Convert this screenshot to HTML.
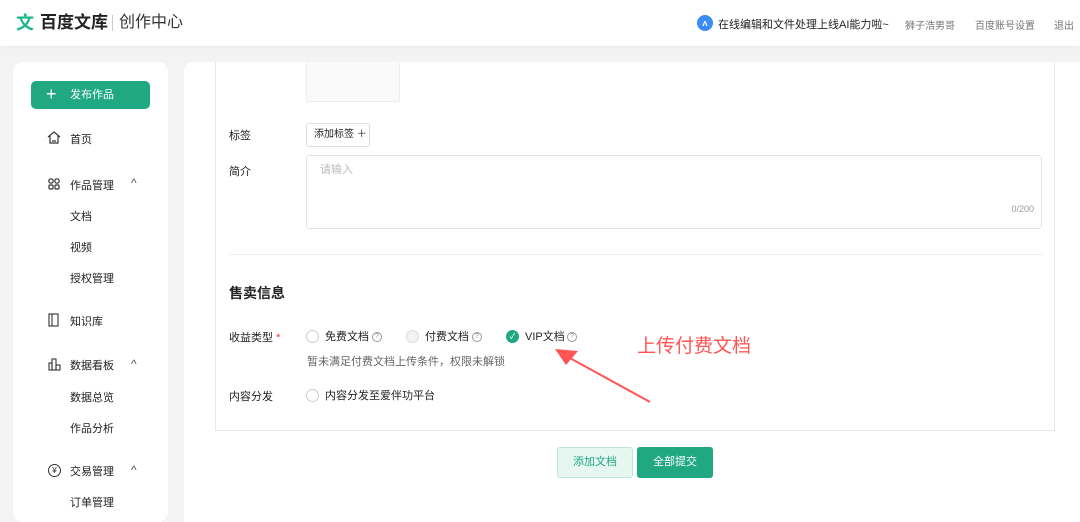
<!DOCTYPE html>
<html><head><meta charset="utf-8"><style>
*{margin:0;padding:0;box-sizing:border-box}
body{width:1080px;height:501px;overflow:hidden;background:#f3f3f4;font-family:"Liberation Sans","Noto Sans CJK SC",sans-serif;color:#222;position:relative;font-size:12px}
.a{position:absolute}
.hdr{left:0;top:0;width:1080px;height:46px;background:#fff;box-shadow:0 1px 4px rgba(0,0,0,.04)}
.side{left:13px;top:62px;width:155px;height:460px;background:#fff;border-radius:10px}
.main{left:184px;top:62px;width:900px;height:460px;background:#fff;border-radius:10px 0 0 0}
.box{left:215px;top:62px;width:840px;height:369px;border:1px solid #e8e8ea;border-top:none;background:#fff}
.nav{font-size:12px;color:#222}
.radio{width:13px;height:13px;border:1px solid #ccc;border-radius:50%;background:#fff}
.q{width:10px;height:10px;border:1px solid #999;border-radius:50%;font-size:7px;line-height:8px;text-align:center;color:#888}
</style></head><body>
<div class="a hdr"></div>
<div class="a" style="left:14px;top:12px;width:22px;height:22px;border-radius:4px;color:#1fb58a;font-size:18px;font-weight:bold;line-height:22px;text-align:center">文</div>
<div class="a" style="left:40px;top:12px;font-size:17px;font-weight:bold;color:#222;line-height:22px">百度文库</div>
<div class="a" style="left:112px;top:15px;width:1px;height:16px;background:#ccc"></div>
<div class="a" style="left:119px;top:12px;font-size:16px;color:#333;line-height:22px">创作中心</div>
<div class="a" style="left:697px;top:15px;width:16px;height:16px;border-radius:50%;background:#3b8cf5;color:#fff;font-size:9px;line-height:16px;text-align:center;font-weight:bold">ʌ</div>
<div class="a" style="left:718px;top:16px;font-size:11px;color:#222;white-space:nowrap">在线编辑和文件处理上线AI能力啦~</div>
<div class="a" style="left:905px;top:17px;font-size:10px;color:#777">狮子浩男哥</div>
<div class="a" style="left:975px;top:17px;font-size:10px;color:#777">百度账号设置</div>
<div class="a" style="left:1054px;top:17px;font-size:10px;color:#777">退出</div>

<div class="a side"></div>
<div class="a" style="left:31px;top:81px;width:119px;height:28px;background:#20a882;border-radius:5px;color:#fff;font-size:11px;line-height:28px"><span style="position:absolute;left:15px;top:-1px;font-size:18px;font-weight:300">+</span><span style="position:absolute;left:39px">发布作品</span></div>
<svg class="a" style="left:47px;top:131px" width="14" height="13" fill="none" stroke="#333" stroke-width="1.2"><path d="M1 6 L7 1 L13 6 M3 5 V12 H11 V5 M5 10 H9"/></svg>
<div class="a nav" style="left:70px;top:131px;font-size:11px">首页</div>
<svg class="a" style="left:48px;top:178px" width="12" height="12" fill="none" stroke="#333" stroke-width="1.2"><circle cx="3" cy="3" r="2.2"/><circle cx="9" cy="3" r="2.2"/><rect x="1" y="7" width="4" height="4" rx="1"/><rect x="7" y="7" width="4" height="4" rx="1"/></svg>
<div class="a nav" style="left:70px;top:177px;font-size:11px">作品管理</div>
<div class="a nav" style="left:131px;top:176px;color:#555">^</div>
<div class="a nav" style="left:70px;top:208px;font-size:11px">文档</div>
<div class="a nav" style="left:70px;top:239px;font-size:11px">视频</div>
<div class="a nav" style="left:70px;top:270px;font-size:11px">授权管理</div>
<svg class="a" style="left:48px;top:313px" width="14" height="14" fill="none" stroke="#333" stroke-width="1.1"><rect x="1" y="1" width="9" height="12"/><line x1="4" y1="1" x2="4" y2="13"/></svg>
<div class="a nav" style="left:70px;top:313px;font-size:11px">知识库</div>
<svg class="a" style="left:48px;top:358px" width="14" height="13" fill="none" stroke="#333" stroke-width="1.1"><rect x="1" y="5" width="3" height="7"/><rect x="4" y="1" width="4" height="11"/><rect x="8" y="7" width="4" height="5"/></svg>
<div class="a nav" style="left:70px;top:357px;font-size:11px">数据看板</div>
<div class="a nav" style="left:131px;top:357px;color:#555">^</div>
<div class="a nav" style="left:70px;top:389px;font-size:11px">数据总览</div>
<div class="a nav" style="left:70px;top:420px;font-size:11px">作品分析</div>
<div class="a" style="left:48px;top:464px;width:13px;height:13px;border:1.2px solid #333;border-radius:50%;font-size:8px;line-height:11px;text-align:center">¥</div>
<div class="a nav" style="left:70px;top:463px;font-size:11px">交易管理</div>
<div class="a nav" style="left:131px;top:463px;color:#555">^</div>
<div class="a nav" style="left:70px;top:494px;font-size:11px">订单管理</div>

<div class="a main"></div>
<div class="a box"></div>
<div class="a" style="left:306px;top:62px;width:94px;height:40px;border:1px solid #eee;border-top:none;background:#fafafa"></div>
<div class="a" style="left:229px;top:127px;font-size:11px">标签</div>
<div class="a" style="left:306px;top:123px;width:64px;height:24px;border:1px solid #ddd;border-radius:3px;font-size:10px;line-height:22px;padding-left:7px">添加标签 ＋</div>
<div class="a" style="left:229px;top:163px;font-size:11px">简介</div>
<div class="a" style="left:306px;top:155px;width:736px;height:74px;border:1px solid #e4e4e4;border-radius:3px"><span style="position:absolute;left:13px;top:5px;color:#bbb;font-size:11px">请输入</span><span style="position:absolute;right:7px;top:48px;color:#999;font-size:9px">0/200</span></div>
<div class="a" style="left:229px;top:254px;width:813px;height:1px;background:#eee"></div>
<div class="a" style="left:229px;top:283px;font-size:14px;font-weight:bold">售卖信息</div>
<div class="a" style="left:229px;top:329px;font-size:11px">收益类型 <span style="color:#e33">*</span></div>
<div class="a radio" style="left:306px;top:330px"></div>
<div class="a" style="left:325px;top:328px;font-size:11px">免费文档</div>
<div class="a q" style="left:372px;top:332px">?</div>
<div class="a radio" style="left:406px;top:330px;background:#f2f2f5;border-color:#ddd"></div>
<div class="a" style="left:425px;top:328px;font-size:11px">付费文档</div>
<div class="a q" style="left:472px;top:332px">?</div>
<div class="a radio" style="left:506px;top:330px;background:#20a882;border-color:#20a882;color:#fff;font-size:8px;line-height:11px;text-align:center">✓</div>
<div class="a" style="left:525px;top:328px;font-size:11px">VIP文档</div>
<div class="a q" style="left:567px;top:332px">?</div>
<div class="a" style="left:307px;top:353px;font-size:11px;color:#666">暂未满足付费文档上传条件，权限未解锁</div>
<div class="a" style="left:229px;top:388px;font-size:11px">内容分发</div>
<div class="a radio" style="left:306px;top:389px"></div>
<div class="a" style="left:325px;top:387px;font-size:11px">内容分发至爱伴功平台</div>
<div class="a" style="left:637px;top:331px;font-size:19px;color:#f55">上传付费文档</div>
<svg class="a" style="left:550px;top:345px" width="105" height="62"><line x1="100" y1="57" x2="18" y2="12" stroke="#f55" stroke-width="2"/><polygon points="5,4 28,6 16,20" fill="#f55"/></svg>
<div class="a" style="left:557px;top:447px;width:76px;height:31px;background:#e6f6f0;border:1px solid #bfe5d6;border-radius:3px;color:#20a882;text-align:center;line-height:29px;font-size:11px">添加文档</div>
<div class="a" style="left:637px;top:447px;width:76px;height:31px;background:#20a882;border-radius:3px;color:#fff;text-align:center;line-height:31px;font-size:11px">全部提交</div>
</body></html>
